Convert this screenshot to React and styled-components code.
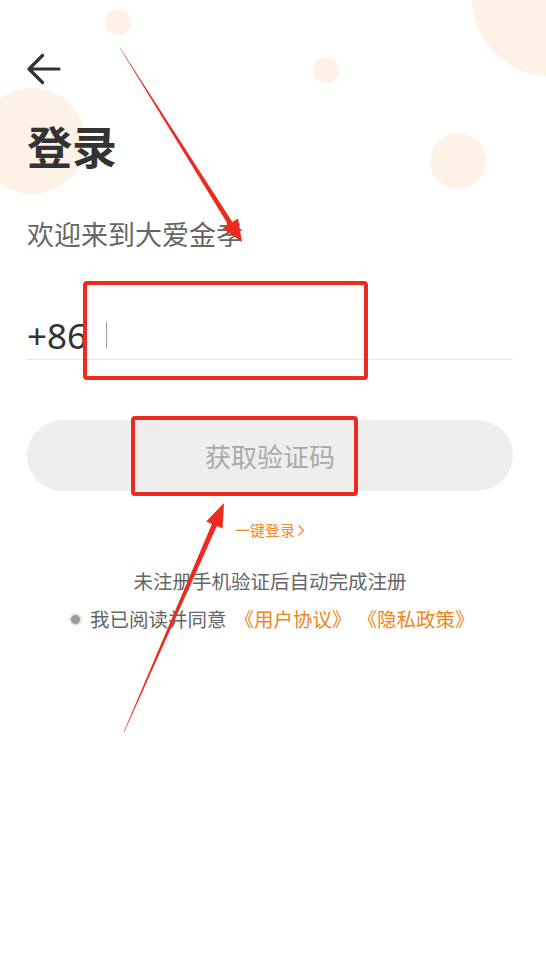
import React from 'react';
import styled, { createGlobalStyle } from 'styled-components';

const GlobalStyle = createGlobalStyle`
  html, body {
    margin: 0;
    padding: 0;
    background: #fff;
  }
  body {
    font-family: "Noto Sans CJK SC", "Noto Sans", sans-serif;
  }
`;

const Page = styled.div`
  position: relative;
  width: 546px;
  height: 955px;
  overflow: hidden;
  background: #fff;
`;

const Bubble = styled.div`
  position: absolute;
  left: ${(p) => p.x - p.r}px;
  top: ${(p) => p.y - p.r}px;
  width: ${(p) => p.r * 2}px;
  height: ${(p) => p.r * 2}px;
  border-radius: 50%;
  background: #fef1e5;
`;

const Content = styled.div`
  position: relative;
  display: flex;
  flex-direction: column;
  padding: 53px 33px 0 27px;
`;

const BackButton = styled.button`
  display: flex;
  align-items: center;
  width: 34px;
  height: 32px;
  padding: 0;
  border: 0;
  background: none;
  color: #333;
`;

const Title = styled.h1`
  margin: 37px 0 0;
  font-size: 45px;
  line-height: 48px;
  font-weight: 700;
  color: #333;
`;

const Subtitle = styled.p`
  margin: 48px 0 0;
  font-size: 27px;
  line-height: 32px;
  color: #666;
`;

const PhoneRow = styled.div`
  display: flex;
  align-items: center;
  height: 48px;
  margin-top: 61px;
  border-bottom: 1px solid #e8e8e8;
`;

const Prefix = styled.span`
  font-family: "Noto Sans", sans-serif;
  font-size: 35px;
  color: #333;
`;

const Cursor = styled.span`
  width: 1px;
  height: 26px;
  margin-left: 19px;
  background: #999;
`;

const CodeButton = styled.button`
  height: 71px;
  margin-top: 60px;
  border: 0;
  border-radius: 36px;
  background: #eeeeee;
  font-family: inherit;
  font-size: 26px;
  color: #aaa;
`;

const QuickLink = styled.a`
  align-self: center;
  display: flex;
  align-items: center;
  gap: 2px;
  margin-top: 29px;
  font-size: 15px;
  line-height: 20px;
  color: #f08a24;
`;

const Notice = styled.p`
  align-self: center;
  margin: 28px 0 0;
  font-size: 19.5px;
  line-height: 26px;
  color: #666;
`;

const AgreeRow = styled.div`
  display: flex;
  align-items: center;
  margin-top: 12px;
  margin-left: 42px;
  font-size: 19.5px;
  line-height: 26px;
  color: #666;
`;

const Radio = styled.span`
  width: 9px;
  height: 9px;
  margin-right: 8px;
  border-radius: 50%;
  background: #9a9a9a;
  border: 2px solid #e4e4e4;
`;

const DocLink = styled.span`
  margin-left: ${(p) => p.gap}px;
  color: #f08519;
`;

const Annotations = styled.svg`
  position: absolute;
  inset: 0;
  pointer-events: none;
`;

const RED = '#ec2a1f';

const ArrowLeft = () => (
  <svg width="34" height="32" viewBox="0 0 34 32" fill="none">
    <path d="M32 16H3M15.5 2.5L2 16l13.5 13.5" stroke="currentColor" strokeWidth="3.2" strokeLinecap="round" strokeLinejoin="round" />
  </svg>
);

const Chevron = () => (
  <svg width="8" height="13" viewBox="0 0 8 13" fill="none">
    <path d="M1.5 1.5L6.5 6.5 1.5 11.5" stroke="currentColor" strokeWidth="1.4" />
  </svg>
);

export default function App() {
  return (
    <Page>
      <GlobalStyle />
      <Bubble x={118} y={22} r={13} />
      <Bubble x={326} y={70} r={13} />
      <Bubble x={550} y={-2} r={78} />
      <Bubble x={32} y={141} r={53} />
      <Bubble x={458} y={161} r={28} />

      <Content>
        <BackButton aria-label="返回">
          <ArrowLeft />
        </BackButton>
        <Title>登录</Title>
        <Subtitle>欢迎来到大爱金孝</Subtitle>
        <PhoneRow>
          <Prefix>+86</Prefix>
          <Cursor />
        </PhoneRow>
        <CodeButton>获取验证码</CodeButton>
        <QuickLink>
          一键登录
          <Chevron />
        </QuickLink>
        <Notice>未注册手机验证后自动完成注册</Notice>
        <AgreeRow>
          <Radio />
          我已阅读并同意
          <DocLink gap={8}>《用户协议》</DocLink>
          <DocLink gap={6}>《隐私政策》</DocLink>
        </AgreeRow>
      </Content>

      <Annotations width="546" height="955" viewBox="0 0 546 955">
        <rect x="85" y="283" width="281" height="95" rx="2" fill="none" stroke={RED} strokeWidth="4" />
        <rect x="133" y="418" width="223" height="76" rx="2" fill="none" stroke={RED} strokeWidth="4" />
        <polygon
          fill={RED}
          points="119.8,48.1 228.2,224.7 222.6,228.2 242,242 238.0,218.6 232.4,222.1 120.2,47.9"
        />
        <polygon
          fill={RED}
          points="123.7,731.9 211.9,524.0 206.2,521.4 224,503 222.6,528.6 216.9,526.0 124.3,732.1"
        />
      </Annotations>
    </Page>
  );
}
